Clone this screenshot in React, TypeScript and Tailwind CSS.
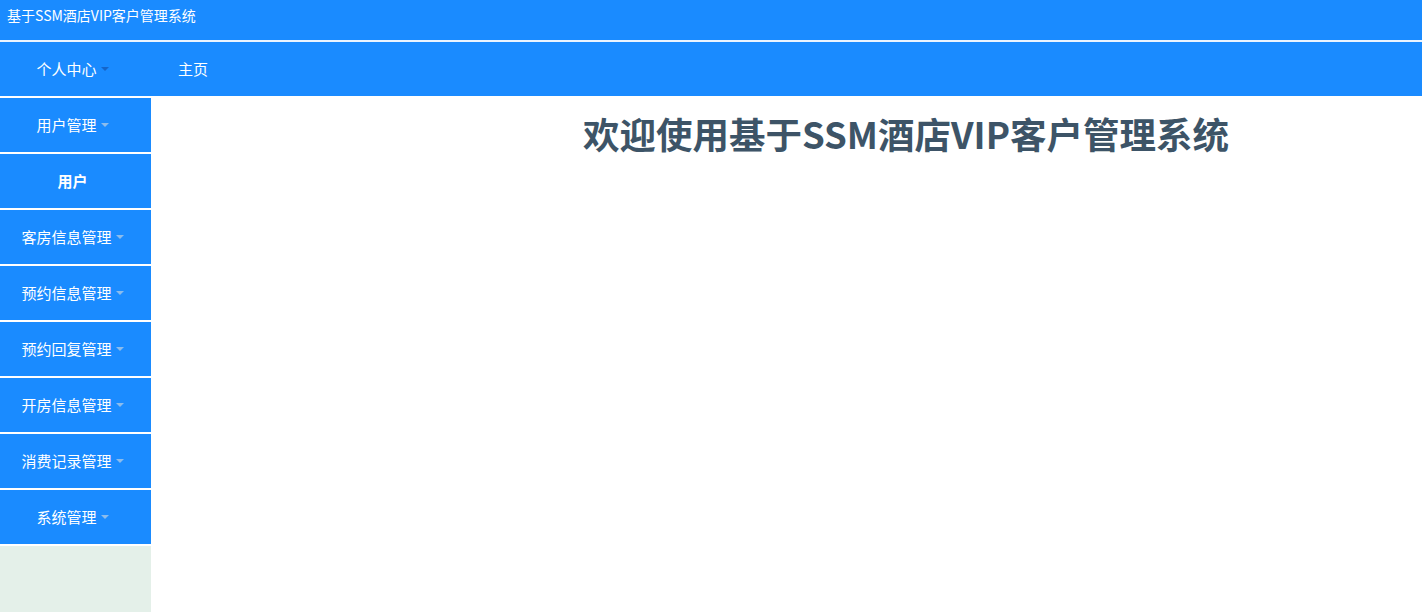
import React from "react";

const font = { fontFamily: '"Noto Sans CJK SC", "Noto Sans", sans-serif' };

function Caret({ dark }: { dark?: boolean }) {
  return (
    <span
      className={`ml-[4px] inline-block h-0 w-0 border-x-[4px] border-t-[4px] border-x-transparent align-middle ${
        dark ? "border-t-[#1565c8]" : "border-t-[#8cbcec]"
      }`}
    />
  );
}

const items = [
  { label: "用户管理", caret: true },
  { label: "用户", bold: true },
  { label: "客房信息管理", caret: true },
  { label: "预约信息管理", caret: true },
  { label: "预约回复管理", caret: true },
  { label: "开房信息管理", caret: true },
  { label: "消费记录管理", caret: true },
  { label: "系统管理", caret: true },
];

export default function App() {
  return (
    <div className="flex h-[612px] w-[1422px] flex-col overflow-hidden bg-white" style={font}>
      <div className="flex h-[40px] items-center bg-[#1a8bff] px-[7px] pb-[10px] text-[14px] text-white">
        基于SSM酒店VIP客户管理系统
      </div>
      <div className="h-[2px] bg-[#eaf4ff]" />
      <div className="flex h-[54px] items-center bg-[#1a8bff] text-[15px] text-white">
        <div className="flex w-[151px] items-center justify-center pr-[6px]">
          个人中心
          <Caret dark />
        </div>
        <div className="ml-[27px]">主页</div>
      </div>
      <div className="flex flex-1">
        <div className="flex w-[151px] flex-col gap-[2px] pt-[2px]">
          {items.map((it) => (
            <div
              key={it.label}
              className={`flex h-[54px] items-center justify-center bg-[#1a8bff] pr-[6px] text-[15px] text-white ${
                it.bold ? "font-bold" : ""
              }`}
            >
              {it.label}
              {it.caret && <Caret />}
            </div>
          ))}
          <div className="flex-1 bg-[#e4f0e9]" />
        </div>
        <div className="flex-1 pl-[432px] pt-[14px]">
          <h1 className="text-[36.5px] font-bold leading-[48px] text-[#3d5467]">
            欢迎使用基于SSM酒店VIP客户管理系统
          </h1>
        </div>
      </div>
    </div>
  );
}
